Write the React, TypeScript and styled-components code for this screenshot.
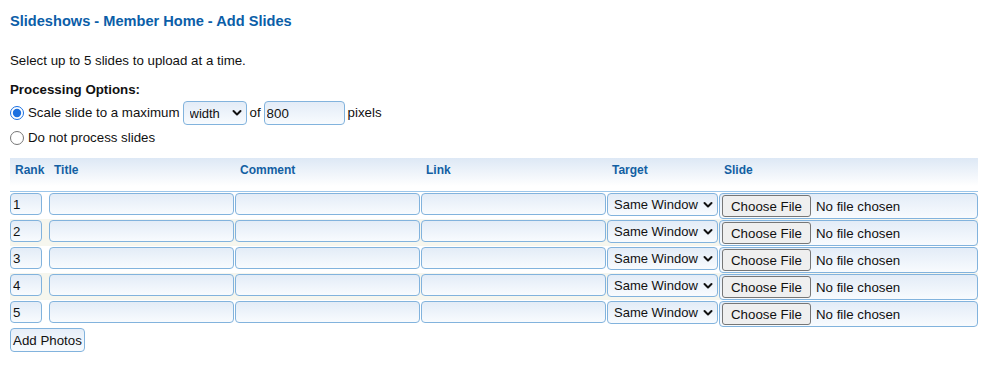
import * as React from 'react';
import styled, {createGlobalStyle} from 'styled-components';

const GlobalStyle = createGlobalStyle`
    *{
        box-sizing: border-box;
        font-family: 'Liberation Sans', Arial, sans-serif;
    }
    body{
        margin: 0;
        padding: 0;
        background: #fff;
        color: #111;
        font-size: 13.3px;
    }
`;

const Page = styled.div`
    padding: 13px 10px 0 10px;
`;

const Heading = styled.h1`
    margin: 0;
    font-size: 14.6px;
    line-height: 16px;
    font-weight: bold;
    color: #0b5ea8;
`;

const Intro = styled.p`
    margin: 24px 0 0 0;
    line-height: 16px;
`;

const OptionsLabel = styled.div`
    margin-top: 13px;
    font-weight: bold;
    line-height: 16px;
`;

const OptionRow = styled.label<{$top: number}>`
    display: flex;
    align-items: center;
    gap: 3px;
    margin-top: ${p => p.$top}px;
    line-height: 16px;
    white-space: nowrap;
`;

const Radio = styled.input`
    margin: 0 1px 0 0;
    width: 14px;
    height: 14px;
    accent-color: #1a6fe0;
`;

const boxLook = `
    border: 1px solid #82b3dd;
    border-radius: 4px;
    background: linear-gradient(#e3ecf7, #f8fbfe);
    font-size: 13.3px;
    color: #111;
    outline: none;
`;

const TextBox = styled.input<{$w: number; $h?: number}>`
    ${boxLook}
    width: ${p => p.$w}px;
    height: ${p => p.$h || 22}px;
    padding: 0 2px;
    margin: 0;
`;

const SelectWrap = styled.span<{$w: number; $h: number}>`
    position: relative;
    display: inline-block;
    width: ${p => p.$w}px;
    height: ${p => p.$h}px;
`;

const Select = styled.select`
    ${boxLook}
    appearance: none;
    width: 100%;
    height: 100%;
    padding: 0 18px 0 6px;
    margin: 0;
    font-size: 13px;
`;

const Chevron = styled.svg`
    position: absolute;
    right: 5px;
    top: 50%;
    margin-top: -4px;
    pointer-events: none;
`;

const Table = styled.div`
    margin-top: 12px;
    width: 968px;
`;

const Grid = styled.div`
    display: grid;
    grid-template-columns: 39px 186px 186px 186px 112px 259px;
    align-items: start;
`;

const HeadRow = styled(Grid)`
    height: 34px;
    background: linear-gradient(#dde8f5, #ffffff 85%);
    border-bottom: 1px solid #9cc6ea;
`;

const HeadCell = styled.div`
    padding: 5px 0 0 5px;
    font-size: 12px;
    line-height: 14px;
    font-weight: bold;
    color: #135fa3;
`;

const BodyRow = styled(Grid)<{$alt: boolean}>`
    height: 27px;
    padding-top: 1px;
    background: ${p => (p.$alt ? '#f6f6ee' : '#fff')};
`;

const FileBox = styled.label`
    ${boxLook}
    display: flex;
    align-items: center;
    gap: 5px;
    width: 259px;
    height: 26px;
    padding: 0 2px;
`;

const FileButton = styled.span`
    display: inline-flex;
    align-items: center;
    height: 22px;
    padding: 0 8px;
    background: #efefef;
    border: 1px solid #767676;
    border-radius: 3px;
    font-size: 13.3px;
    color: #111;
`;

const AddButton = styled.button`
    ${boxLook}
    margin-top: 1px;
    height: 24px;
    width: 75px;
    padding: 0;
    background: linear-gradient(#e6eef8, #f8fbfe);
    cursor: pointer;
`;

const ChevronIcon = () => (
    <Chevron width="10" height="8" viewBox="0 0 10 8">
        <path d="M1.5 2 L5 5.5 L8.5 2" fill="none" stroke="#111" strokeWidth="2" strokeLinecap="round" strokeLinejoin="round"/>
    </Chevron>
);

const ranks = [1, 2, 3, 4, 5];

const App = () => {
    return (
        <>
            <GlobalStyle/>
            <Page>
                <Heading>Slideshows - Member Home - Add Slides</Heading>
                <Intro>Select up to 5 slides to upload at a time.</Intro>
                <OptionsLabel>Processing Options:</OptionsLabel>
                <OptionRow $top={3}>
                    <Radio type="radio" name="proc" defaultChecked/>
                    Scale slide to a maximum
                    <SelectWrap $w={64} $h={24}>
                        <Select defaultValue="width">
                            <option value="width">width</option>
                            <option value="height">height</option>
                        </Select>
                        <ChevronIcon/>
                    </SelectWrap>
                    of
                    <TextBox $w={81} $h={24} defaultValue="800"/>
                    pixels
                </OptionRow>
                <OptionRow $top={5}>
                    <Radio type="radio" name="proc"/>
                    Do not process slides
                </OptionRow>
                <Table>
                    <HeadRow>
                        <HeadCell>Rank</HeadCell>
                        <HeadCell>Title</HeadCell>
                        <HeadCell>Comment</HeadCell>
                        <HeadCell>Link</HeadCell>
                        <HeadCell>Target</HeadCell>
                        <HeadCell>Slide</HeadCell>
                    </HeadRow>
                    {ranks.map(r => (
                        <BodyRow key={r} $alt={r % 2 === 0}>
                            <TextBox $w={32} defaultValue={String(r)}/>
                            <TextBox $w={185}/>
                            <TextBox $w={185}/>
                            <TextBox $w={185}/>
                            <SelectWrap $w={111} $h={23}>
                                <Select defaultValue="same">
                                    <option value="same">Same Window</option>
                                    <option value="new">New Window</option>
                                </Select>
                                <ChevronIcon/>
                            </SelectWrap>
                            <FileBox>
                                <FileButton>Choose File</FileButton>
                                No file chosen
                            </FileBox>
                        </BodyRow>
                    ))}
                </Table>
                <AddButton>Add Photos</AddButton>
            </Page>
        </>
    );
};

export default App;
